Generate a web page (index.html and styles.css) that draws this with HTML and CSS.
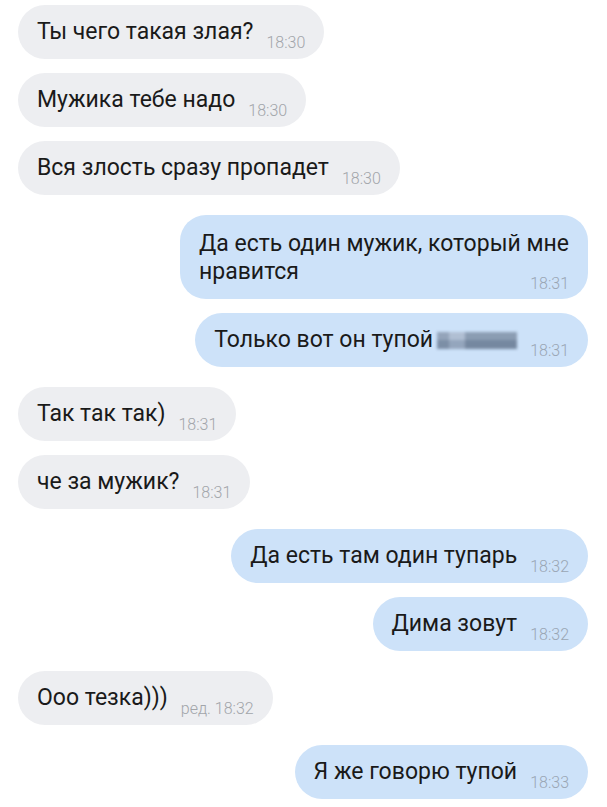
FILE: index.html
```html
<!DOCTYPE html>
<html lang="ru">
<head>
<meta charset="utf-8">
<link rel="stylesheet" href="styles.css">
</head>
<body>
<div class="chat">
  <div class="msg in"><div class="bubble"><span class="text">Ты чего такая злая?</span><span class="time">18:30</span></div></div>
  <div class="msg in"><div class="bubble"><span class="text">Мужика тебе надо</span><span class="time">18:30</span></div></div>
  <div class="msg in"><div class="bubble"><span class="text">Вся злость сразу пропадет</span><span class="time">18:30</span></div></div>
  <div class="msg out gap"><div class="bubble multi"><span class="text">Да есть один мужик, который мне<br>нравится</span><span class="time">18:31</span></div></div>
  <div class="msg out"><div class="bubble"><span class="text">Только вот он тупой<span class="blur"></span></span><span class="time">18:31</span></div></div>
  <div class="msg in gap"><div class="bubble"><span class="text">Так так так)</span><span class="time">18:31</span></div></div>
  <div class="msg in"><div class="bubble"><span class="text">че за мужик?</span><span class="time">18:31</span></div></div>
  <div class="msg out gap"><div class="bubble"><span class="text">Да есть там один тупарь</span><span class="time">18:32</span></div></div>
  <div class="msg out"><div class="bubble"><span class="text">Дима зовут</span><span class="time">18:32</span></div></div>
  <div class="msg in gap"><div class="bubble"><span class="text">Ооо тезка)))</span><span class="time">ред. 18:32</span></div></div>
  <div class="msg out gap"><div class="bubble"><span class="text">Я же говорю тупой</span><span class="time">18:33</span></div></div>
</div>
</body>
</html>
```
FILE: styles.css
```css
html, body {
  margin: 0;
  padding: 0;
  background: #ffffff;
}
.chat {
  display: flex;
  flex-direction: column;
  gap: 14px;
  padding: 5px 19px 0 18px;
  font-family: Roboto, "Noto Sans", sans-serif;
}
.msg {
  display: flex;
}
.msg.gap {
  margin-top: 6px;
}
.msg.in {
  justify-content: flex-start;
}
.msg.out {
  justify-content: flex-end;
}
.bubble {
  display: flex;
  align-items: flex-end;
  border-radius: 27px;
  padding: 13px 19px 8px 19px;
}
.in .bubble {
  background: #edeef1;
}
.out .bubble {
  background: #cde2f9;
}
.text {
  font-size: 23px;
  line-height: 28px;
  color: #1a1a1a;
  margin-bottom: 5px;
  white-space: nowrap;
}
.time {
  font-size: 16px;
  font-weight: 300;
  line-height: 16px;
  color: #a2a5aa;
  margin-left: 13px;
  white-space: nowrap;
}
.out .time {
  color: #9aa6b4;
}
.bubble.multi {
  flex-direction: column;
  align-items: stretch;
  border-radius: 26px;
  padding-top: 15px;
  padding-bottom: 7px;
}
.bubble.multi .text {
  margin-bottom: 0;
}
.bubble.multi .time {
  align-self: flex-end;
  margin-top: -10px;
}
.blur {
  display: inline-block;
  width: 80px;
  height: 17px;
  margin-left: 4px;
  vertical-align: -2px;
  background:
    linear-gradient(180deg, rgba(205,214,226,0.9) 0 45%, rgba(168,182,199,0.9) 45% 100%),
    linear-gradient(90deg, #b3c0cf 0 15%, #d6dfeb 15% 35%, #a9b7c7 35% 100%);
  background-blend-mode: multiply;
  filter: blur(1.5px);
}
```
